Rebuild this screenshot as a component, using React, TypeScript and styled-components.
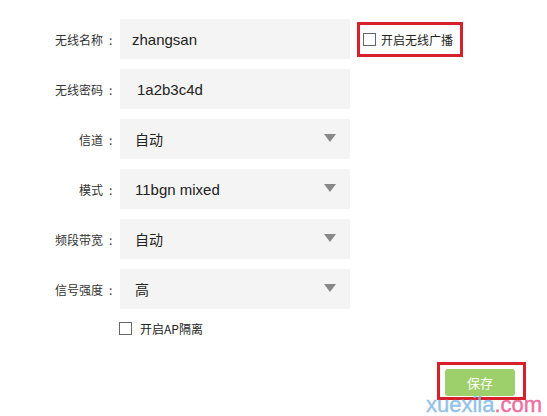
import React from "react";
import styled, { createGlobalStyle } from "styled-components";

const GlobalStyle = createGlobalStyle`
  html, body {
    margin: 0;
    padding: 0;
    background: #fff;
  }
  body {
    width: 547px;
    height: 416px;
    overflow: hidden;
    font-family: "Liberation Sans", "Noto Sans CJK SC", sans-serif;
  }
`;

const Page = styled.div`
  position: relative;
  width: 547px;
  height: 416px;
  padding-top: 19px;
  box-sizing: border-box;
`;

const Row = styled.div`
  display: flex;
  align-items: center;
  height: 40px;
  margin-bottom: 10px;
`;

const Label = styled.div`
  width: 112px;
  padding-right: 8px;
  display: flex;
  justify-content: flex-end;
  align-items: center;
  font-family: "Noto Sans CJK SC", sans-serif;
  font-size: 12px;
  color: #333;
`;

const Colon = styled.span`
  margin-left: 6px;
  width: 3px;
`;

const Field = styled.div<{ $pad: number }>`
  position: relative;
  display: flex;
  align-items: center;
  width: 230px;
  height: 40px;
  box-sizing: border-box;
  padding-left: ${({ $pad }) => $pad}px;
  background: #f4f4f4;
  font-family: "Liberation Sans", "Noto Sans CJK SC", sans-serif;
  font-size: 15px;
  color: #222;
`;

const Cjk = styled.span`
  font-size: 14px;
`;

const Arrow = styled.span`
  position: absolute;
  right: 14px;
  top: 15px;
  width: 0;
  height: 0;
  border-left: 6px solid transparent;
  border-right: 6px solid transparent;
  border-top: 8px solid #888;
`;

const Highlight = styled.div`
  display: flex;
  align-items: center;
  margin-left: 7px;
  border: 3px solid #d7202a;
  padding: 0 7px 0 3px;
  height: 29px;
`;

const CheckLabel = styled.label`
  display: flex;
  align-items: center;
  gap: 5px;
  font-family: "Noto Sans CJK SC", sans-serif;
  font-size: 12px;
  color: #222;
`;

const Box = styled.span`
  display: inline-block;
  width: 11px;
  height: 11px;
  border: 1px solid #666;
  background: #fff;
`;

const OptionRow = styled.div`
  display: flex;
  padding-left: 119px;
  margin-top: 11px;
`;

const ApLabel = styled(CheckLabel)`
  gap: 8px;
`;

const Footer = styled.div`
  display: flex;
  justify-content: flex-end;
  padding-right: 21px;
  margin-top: 25px;
`;

const SaveFrame = styled.div`
  border: 3px solid #d7202a;
  padding: 4px 8px 1px 5px;
`;

const SaveButton = styled.button`
  width: 70px;
  height: 27px;
  border: none;
  border-radius: 3px;
  background: #9dd06a;
  color: #fff;
  font-family: "Noto Sans CJK SC", sans-serif;
  font-size: 13px;
  padding: 0;
`;

const Watermark = styled.div`
  position: absolute;
  left: 426px;
  top: 393px;
  font-family: "Liberation Sans", sans-serif;
  font-size: 22px;
  line-height: 24px;
  opacity: 0.85;
  white-space: nowrap;
  -webkit-text-stroke: 0.4px currentColor;
`;

const Mark = styled.span<{ $c: string }>`
  color: ${({ $c }) => $c};
`;

type FieldDef = { label: string; value: string; pad: number; select?: boolean; cjk?: boolean };

const fields: FieldDef[] = [
  { label: "无线名称", value: "zhangsan", pad: 12 },
  { label: "无线密码", value: "1a2b3c4d", pad: 17 },
  { label: "信道", value: "自动", pad: 15, select: true, cjk: true },
  { label: "模式", value: "11bgn mixed", pad: 15, select: true },
  { label: "频段带宽", value: "自动", pad: 15, select: true, cjk: true },
  { label: "信号强度", value: "高", pad: 15, select: true, cjk: true },
];

export default function App() {
  return (
    <>
      <GlobalStyle />
      <Page>
        {fields.map((f, i) => (
          <Row key={f.label}>
            <Label>
              {f.label}
              <Colon>:</Colon>
            </Label>
            <Field $pad={f.pad}>
              {f.cjk ? <Cjk>{f.value}</Cjk> : f.value}
              {f.select && <Arrow />}
            </Field>
            {i === 0 && (
              <Highlight>
                <CheckLabel>
                  <Box />
                  开启无线广播
                </CheckLabel>
              </Highlight>
            )}
          </Row>
        ))}
        <OptionRow>
          <ApLabel>
            <Box />
            开启AP隔离
          </ApLabel>
        </OptionRow>
        <Footer>
          <SaveFrame>
            <SaveButton>保存</SaveButton>
          </SaveFrame>
        </Footer>
        <Watermark>
          <Mark $c="#7fb8e4">xuexila</Mark>
          <Mark $c="#ec5590">.com</Mark>
        </Watermark>
      </Page>
    </>
  );
}
